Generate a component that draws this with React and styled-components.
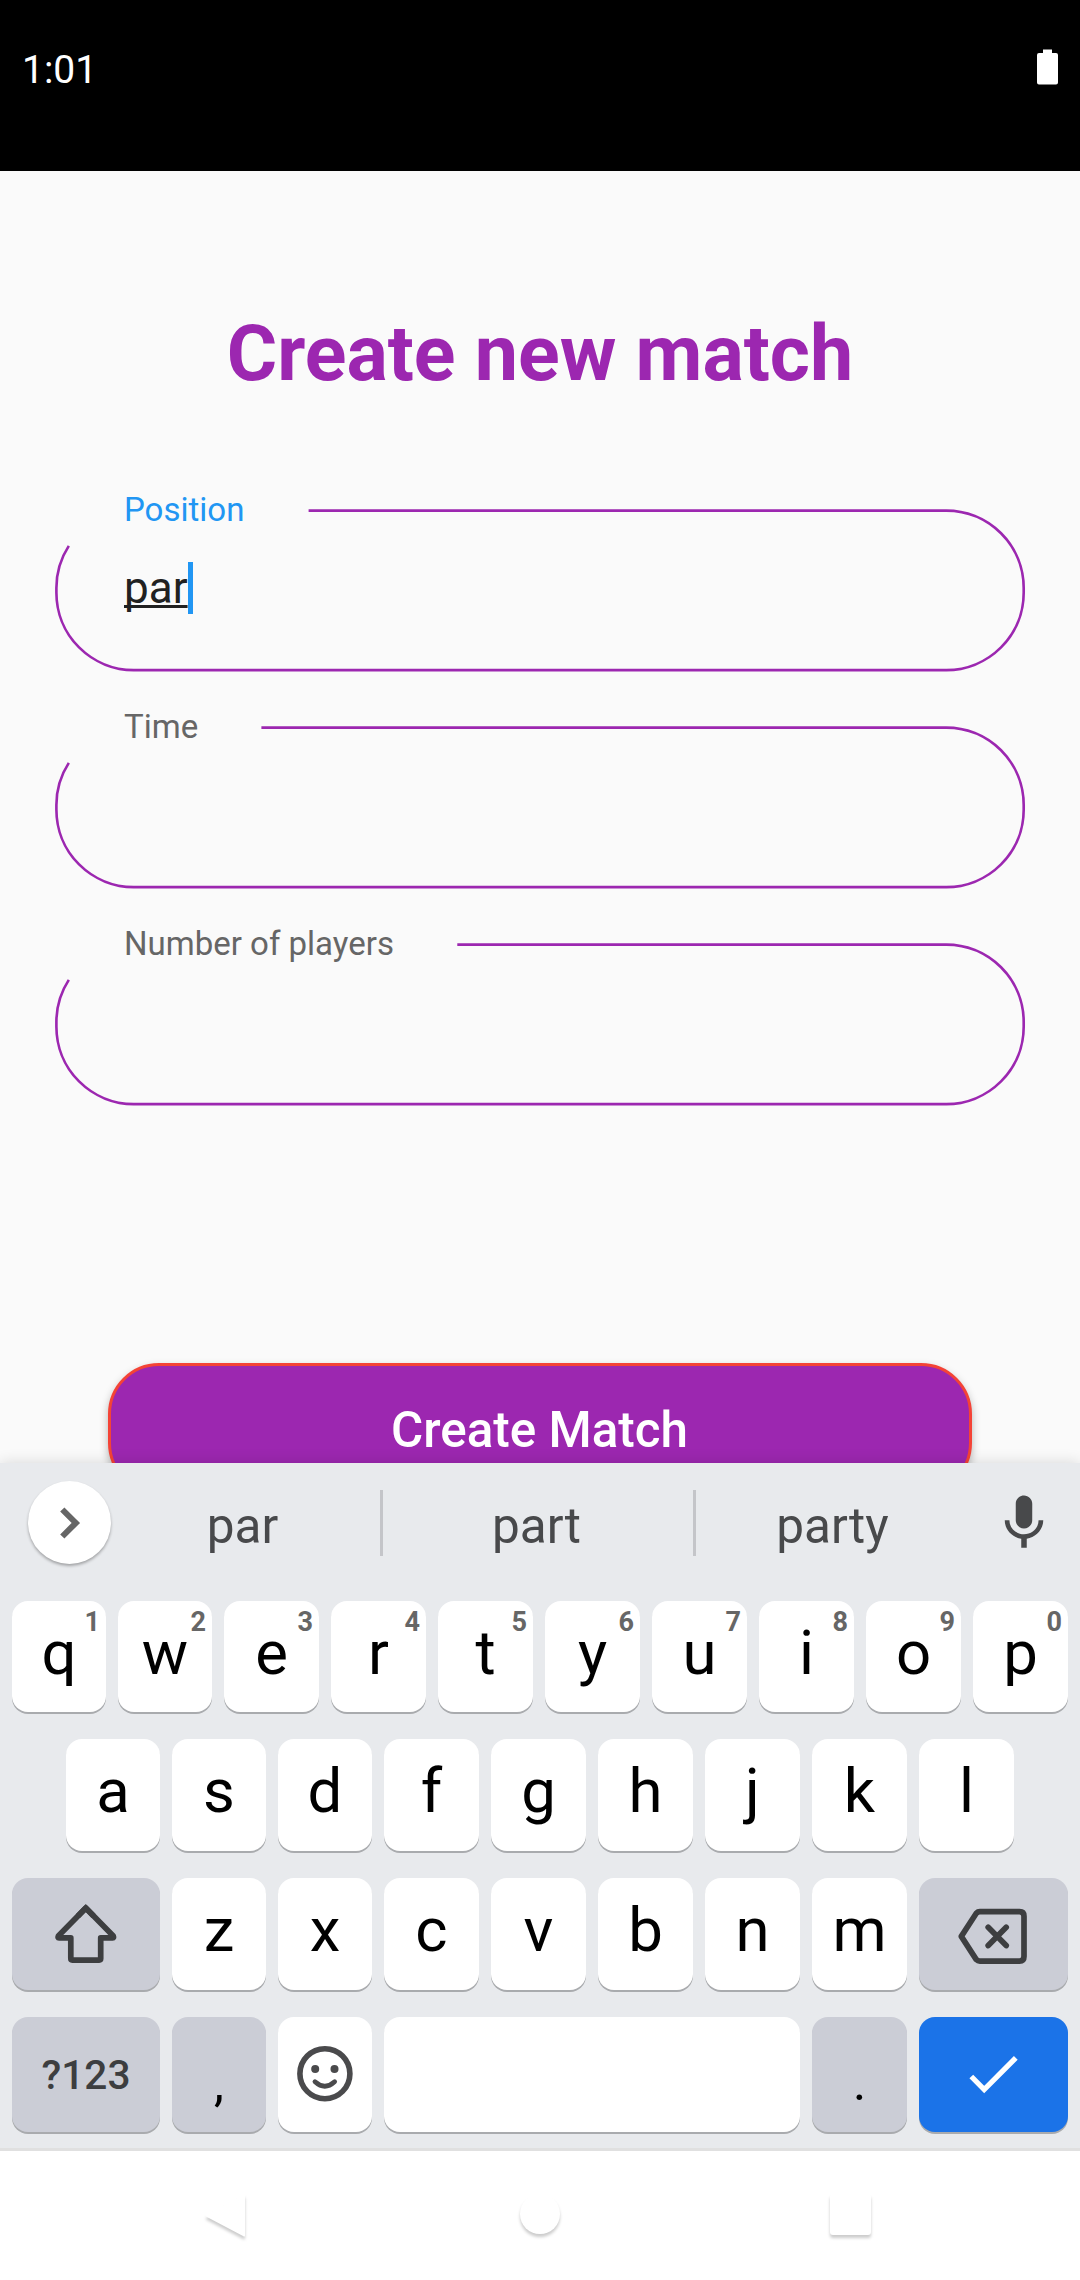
import React from "react";
import styled, { createGlobalStyle } from "styled-components";

const GlobalStyle = createGlobalStyle`
  * { box-sizing: border-box; }
  html, body { margin: 0; padding: 0; }
  body { background: #fafafa; font-family: Roboto, "Liberation Sans", sans-serif; }
`;

const Screen = styled.div`
  width: 1080px;
  height: 2280px;
  display: flex;
  flex-direction: column;
  overflow: hidden;
  background: #fafafa;
`;

const StatusBar = styled.header`
  flex: none;
  height: 171px;
  padding: 49px 22px 0 22px;
  display: flex;
  justify-content: space-between;
  align-items: flex-start;
  background: #000;
  color: #fff;
`;

const Clock = styled.span`
  font-size: 39px;
  line-height: 42px;
`;

const BatteryIcon = styled.svg`
  display: block;
  width: 21px;
  height: 36px;
`;

const Page = styled.main`
  flex: none;
  height: 1292px;
  overflow: hidden;
  display: flex;
  flex-direction: column;
  align-items: center;
`;

const Title = styled.h1`
  margin: 135px 0 0;
  height: 96px;
  font-size: 77.2px;
  line-height: 96px;
  font-weight: 700;
  color: #9c27b0;
  white-space: nowrap;
`;

const Form = styled.form`
  margin-top: 107px;
  width: 970px;
`;

const Field = styled.label`
  position: relative;
  display: flex;
  flex-direction: column;
  height: 217.2px;
  padding-left: 69px;
`;

const FieldLabel = styled.span`
  position: relative;
  top: -19.4px;
  height: 40px;
  font-size: 33px;
  line-height: 40px;
  color: ${(p) => (p.$active ? "#2196f3" : "#666")};
`;

const FieldOutline = styled.svg`
  position: absolute;
  left: 0;
  top: 0;
  overflow: visible;
`;

const FieldValue = styled.span`
  display: flex;
  align-items: center;
  margin-top: 13px;
  height: 52px;
  font-size: 44px;
  line-height: 52px;
  color: #212121;
`;

const Composing = styled.span`
  text-decoration: underline;
  text-decoration-thickness: 2.6px;
  text-underline-offset: 2px;
  text-decoration-skip-ink: none;
`;

const Caret = styled.i`
  width: 5.5px;
  height: 52px;
  background: #2196f3;
`;

const SubmitButton = styled.button`
  flex: none;
  margin-top: 202px;
  width: 864px;
  height: 131px;
  border: 3px solid #f44336;
  border-radius: 51px;
  background: #9c27b0;
  box-shadow: 0 4px 8px rgba(0, 0, 0, 0.28);
  color: #fff;
  font-family: inherit;
  font-size: 49.4px;
  font-weight: 500;
  line-height: 60px;
  padding: 3px 1px 0 0;
`;

const Keyboard = styled.section`
  position: relative;
  flex: none;
  height: 688px;
  background: #e8eaed;
  border-bottom: 3px solid #e0e0e0;
  box-shadow: 0 0 14px rgba(0, 0, 0, 0.14);
`;

const Suggestions = styled.div`
  height: 138px;
  padding: 18px 23px 0 28px;
  display: flex;
  align-items: flex-start;
`;

const ExpandButton = styled.button`
  flex: none;
  width: 83px;
  height: 83px;
  padding: 0;
  border: 0;
  border-radius: 50%;
  background: #fff;
  box-shadow: 0 2px 3px rgba(0, 0, 0, 0.3);
`;

const Suggestion = styled.span`
  width: ${(p) => p.$width}px;
  padding-top: 14px;
  padding-right: ${(p) => p.$trail}px;
  text-align: center;
  font-size: 49.5px;
  line-height: 62px;
  color: #48494b;
`;

const Divider = styled.i`
  flex: none;
  width: 3px;
  height: 66px;
  margin-top: 9px;
  background: #c4c5c9;
`;

const MicSlot = styled.span`
  flex: none;
  margin-left: auto;
  margin-top: 9px;
  width: 66px;
  height: 66px;
`;

const Icon = styled.svg`
  display: block;
  width: 100%;
  height: 100%;
`;

const KeyRows = styled.div`
  display: flex;
  flex-direction: column;
  gap: 27px;
`;

const KeyRow = styled.div`
  display: flex;
  gap: 12px;
  height: ${(p) => p.$height || 112}px;
  padding: 0 ${(p) => p.$inset || 12}px;
`;

const keyFill = { letter: "#fff", modifier: "#cbcdd6", action: "#1b73e8" };

const Key = styled.button`
  position: relative;
  flex: ${(p) => (p.$grow ? "1 1 0" : `0 0 ${p.$width || 95}px`)};
  min-width: 0;
  height: 100%;
  padding: 0;
  border: 0;
  border-radius: 16px;
  background: ${(p) => keyFill[p.$kind || "letter"]};
  box-shadow: 0 2px 0 #a9abae;
  display: flex;
  justify-content: center;
  align-items: flex-start;
  font-family: inherit;
  color: #000;
`;

const Glyph = styled.span`
  font-size: 61.7px;
  line-height: 105px;
`;

const Hint = styled.span`
  position: absolute;
  top: 5px;
  right: 6px;
  font-size: 27px;
  line-height: 32px;
  font-weight: 700;
  color: #666;
`;

const SymbolsLabel = styled.span`
  font-size: 40.6px;
  line-height: 117px;
  font-weight: 500;
  color: #3d3e40;
`;

const Punctuation = styled.span`
  font-size: 50px;
  line-height: 132px;
`;

const NavBar = styled.nav`
  position: relative;
  flex: 1;
  display: flex;
  justify-content: space-between;
  padding: 39px 205px 0;
  background: #fff;
`;

const NavIcon = styled.svg`
  display: block;
  width: 44px;
  height: 50px;
  overflow: visible;
  fill: #fff;
  filter: drop-shadow(0 3px 1.5px rgba(0, 0, 0, 0.2));
`;

function Outline({ gap }) {
  return (
    <FieldOutline width="970" height="162" fill="none" stroke="#9c27b0" strokeWidth="2.63">
      <path d={`M${gap} 1.6H891.3A77.4 77.4 0 0 1 968.7 79V83.7A77.4 77.4 0 0 1 891.3 161.1H78.8A77.4 77.4 0 0 1 1.4 83.7V79A77.4 77.4 0 0 1 13.8 36.9`} />
    </FieldOutline>
  );
}

const rows = ["qwertyuiop", "asdfghjkl", "zxcvbnm"].map((r) => r.split(""));

export default function App() {
  return (
    <>
      <GlobalStyle />
      <Screen>
        <StatusBar>
          <Clock>1:01</Clock>
          <BatteryIcon viewBox="0 0 21 36">
            <path fill="#fff" d="M6 0.5h9V4h4a2 2 0 0 1 2 2v27.5a2 2 0 0 1-2 2H2a2 2 0 0 1-2-2V6a2 2 0 0 1 2-2h4z" />
          </BatteryIcon>
        </StatusBar>
        <Page>
          <Title>Create new match</Title>
          <Form>
            <Field>
              <Outline gap={253.6} />
              <FieldLabel $active>Position</FieldLabel>
              <FieldValue>
                <Composing>par</Composing>
                <Caret />
              </FieldValue>
            </Field>
            <Field>
              <Outline gap={206.4} />
              <FieldLabel>Time</FieldLabel>
            </Field>
            <Field>
              <Outline gap={402.3} />
              <FieldLabel>Number of players</FieldLabel>
            </Field>
          </Form>
          <SubmitButton type="button">Create Match</SubmitButton>
        </Page>
        <Keyboard>
          <Suggestions>
            <ExpandButton aria-label="Expand">
              <Icon viewBox="0 0 83 83">
                <path d="M34.3 28.5L47.8 42L34.3 55.5" fill="none" stroke="#666" strokeWidth="6" />
              </Icon>
            </ExpandButton>
            <Suggestion $width={269} $trail={6}>par</Suggestion>
            <Divider />
            <Suggestion $width={310} $trail={3}>part</Suggestion>
            <Divider />
            <Suggestion $width={274} $trail={1}>party</Suggestion>
            <MicSlot>
              <Icon viewBox="0 0 24 24" fill="#48494b">
                <path d="M12 14c1.66 0 2.99-1.34 2.99-3L15 5c0-1.66-1.34-3-3-3S9 3.34 9 5v6c0 1.66 1.34 3 3 3zm5.3-3c0 3-2.54 5.1-5.3 5.1S6.7 14 6.7 11H5c0 3.41 2.72 6.23 6 6.72V21h2v-3.28c3.28-.48 6-3.3 6-6.72h-1.7z" />
              </Icon>
            </MicSlot>
          </Suggestions>
          <KeyRows>
            <KeyRow $height={111}>
              {rows[0].map((c, i) => (
                <Key key={c} $width={i < 2 ? 94 : 95}>
                  <Glyph>{c}</Glyph>
                  <Hint>{(i + 1) % 10}</Hint>
                </Key>
              ))}
            </KeyRow>
            <KeyRow $inset={66}>
              {rows[1].map((c, i) => (
                <Key key={c} $width={i < 3 ? 94 : 95}>
                  <Glyph>{c}</Glyph>
                </Key>
              ))}
            </KeyRow>
            <KeyRow>
              <Key $kind="modifier" $width={148} aria-label="Shift">
                <Icon viewBox="0 -0.5 148 112" fill="none" stroke="#3d3e40" strokeWidth="5.7">
                  <path strokeLinejoin="round" d="M73.8 29.5L46.3 57.6Q45.5 59.4 47 59.4H58.8V80.1Q58.8 81.6 60.3 81.6H87.2Q88.7 81.6 88.7 80.1V59.4H100.6Q102.1 59.4 101.3 57.6Z" />
                  <path d="M66 37.5L73.8 29.5L81.6 37.5" />
                </Icon>
              </Key>
              {rows[2].map((c, i) => (
                <Key key={c} $width={i < 2 ? 94 : 95}>
                  <Glyph>{c}</Glyph>
                </Key>
              ))}
              <Key $kind="modifier" $width={149} aria-label="Backspace">
                <Icon viewBox="0 0 149 112" fill="none" stroke="#3d3e40" strokeWidth="5.7" strokeLinejoin="round">
                  <path d="M42.3 58.4L57.3 35.2Q58.8 33.7 60.8 33.7H100.5Q105 33.7 105 38.2V78.6Q105 83.1 100.5 83.1H60.8Q58.8 83.1 57.3 81.6Z" />
                  <path strokeLinecap="round" d="M69.2 49.2L87.2 67.6M87.2 49.2L69.2 67.6" />
                </Icon>
              </Key>
            </KeyRow>
            <KeyRow $height={115}>
              <Key $kind="modifier" $width={148}>
                <SymbolsLabel>?123</SymbolsLabel>
              </Key>
              <Key $kind="modifier" $width={94}>
                <Punctuation>,</Punctuation>
              </Key>
              <Key $width={94} aria-label="Emoji">
                <Icon viewBox="0 0 94 115">
                  <circle cx="46.9" cy="56.7" r="25" fill="none" stroke="#4a4a4c" strokeWidth="5.6" />
                  <circle cx="37.2" cy="52" r="4" fill="#4a4a4c" />
                  <circle cx="56.5" cy="52" r="4" fill="#4a4a4c" />
                  <path d="M37 64.7Q46.8 73.6 56.6 64.7" fill="none" stroke="#4a4a4c" strokeWidth="4.8" strokeLinecap="round" />
                </Icon>
              </Key>
              <Key $grow aria-label="Space" />
              <Key $kind="modifier">
                <Punctuation>.</Punctuation>
              </Key>
              <Key $kind="action" $width={149} aria-label="Done">
                <Icon viewBox="0 0 149 115">
                  <path d="M52.3 59.5L65.2 72.6L96.8 40.8" fill="none" stroke="#fff" strokeWidth="5.3" />
                </Icon>
              </Key>
            </KeyRow>
          </KeyRows>
        </Keyboard>
        <NavBar>
          <NavIcon viewBox="0 0 44 50">
            <path d="M39 4.5Q40 4 40 5.5V45.5Q40 47 38.5 46.2L1.5 26.8Q0 25.7 1.5 24.8Z" />
          </NavIcon>
          <NavIcon viewBox="0 0 44 50">
            <circle cx="22" cy="24" r="20" />
          </NavIcon>
          <NavIcon viewBox="0 0 44 50">
            <rect x="-1" y="4" width="41" height="41" rx="3" />
          </NavIcon>
        </NavBar>
      </Screen>
    </>
  );
}
